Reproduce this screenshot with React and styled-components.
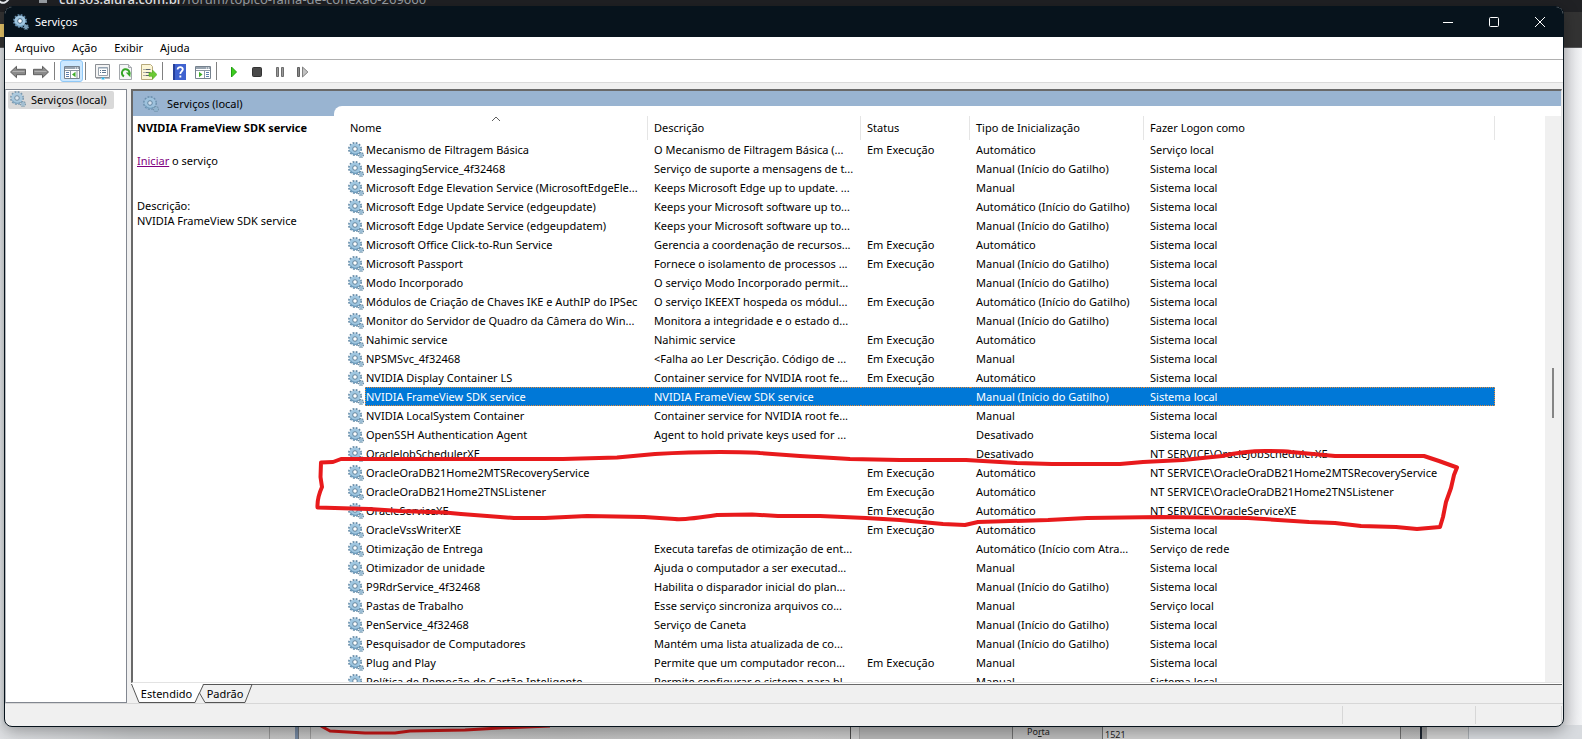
import React from 'react';
import styled, { createGlobalStyle } from 'styled-components';

const GlobalStyle = createGlobalStyle`
  *, *::before, *::after { box-sizing: border-box; }
  body {
    margin: 0;
    overflow: hidden;
    font: 11px/15px "Noto Sans", "Open Sans", sans-serif;
    color: #000;
  }
  button { font: inherit; color: inherit; border: 0; padding: 0; background: none; }
`;

/* ---------- desktop behind the window ---------- */

const Desktop = styled.div`
  position: relative;
  display: flex;
  flex-direction: column;
  height: 100vh;
  overflow: hidden;
  background: linear-gradient(90deg, #e4e7ea 0, #d6dadd 5px, #d6dadd calc(100% - 20px), #e2e3e6 calc(100% - 16px), #f3f4f6 100%);
`;

const BrowserTop = styled.div`
  flex: none;
  height: 48px;
  background: linear-gradient(#202124 12px, #333333 12px);
  border-bottom: 1px solid #57585a;
`;

const AddressLine = styled.div`
  display: flex;
  align-items: flex-end;
  height: 7px;
  padding-left: 39px;
  gap: 12px;
  font-size: 13px;
  line-height: 15px;
  color: #9aa0a6;
  white-space: nowrap;
  overflow: hidden;
  b { font-weight: 500; color: #e8eaed; }
`;

const LockBody = styled.span`
  flex: none;
  width: 8px;
  height: 6px;
  margin-bottom: 4px;
  background: #9aa0a6;
`;

const Spacer = styled.div` flex: 1; `;

const Behind = styled.div`
  flex: none;
  display: flex;
  height: 14px;
  background: linear-gradient(90deg, #dfe1e4 0, #c9cbcd 130px, #c6c6c6 270px, #c0c0c0 560px, #cccccc 800px, #bcbcbc 100%);
`;

const Strip = styled.div`
  flex: ${(p) => (p.$grow ? '1 1 0' : 'none')};
  width: ${(p) => p.$w || 0}px;
  background: ${(p) => p.$bg || 'transparent'};
  border-right: ${(p) => p.$line || 1}px solid ${(p) => p.$edge || 'transparent'};
`;

const PortField = styled.label`
  display: flex;
  flex: none;
  font-size: 9px;
  line-height: 13px;
  color: #222;
  background: #bdbdbd;
  padding-left: 14px;
  span { width: 75px; }
  input {
    width: 299px;
    height: 18px;
    padding: 0 2px;
    border: 1px solid #707070;
    background: #cfcfcf;
    font: inherit;
    color: #222;
  }
`;

/* ---------- window frame ---------- */

const Window = styled.main`
  position: absolute;
  inset: 6px 18px 12px 4px;
  display: flex;
  flex-direction: column;
  overflow: hidden;
  border: 1px solid #07131c;
  border-radius: 8px;
  background: #f0f0f0;
  box-shadow: 0 4px 16px rgba(0, 0, 0, 0.32);
`;

const TitleBar = styled.header`
  flex: none;
  display: flex;
  align-items: center;
  height: 30px;
  padding-left: 8px;
  gap: 6px;
  background: #07131c;
  color: #fff;
  h1 { margin: 0; flex: 1; padding-bottom: 1px; font-size: 11px; font-weight: 400; }
`;

const CaptionGroup = styled.div` display: flex; `;

const CaptionButton = styled.button`
  display: grid;
  place-items: center;
  width: 46px;
  height: 28px;
`;

const MenuBar = styled.nav`
  flex: none;
  display: flex;
  gap: 17px;
  height: 23px;
  padding: 0 10px 2px;
  background: #fff;
  border-bottom: 1px solid #b0b0b0;
`;

const ToolBar = styled.div`
  flex: none;
  display: flex;
  align-items: center;
  height: 23px;
  padding: 0 1px;
  background: #fff;
  border-bottom: 1px solid #dadada;
`;

const ToolButton = styled.button`
  display: grid;
  place-items: center;
  width: 23px;
  height: 22px;
  padding-top: 2px;
  border: 1px solid ${(p) => (p.$active ? '#90c8f6' : 'transparent')};
  border-radius: 3px;
  background: ${(p) => (p.$active ? '#cce8ff' : 'none')};
`;

const ToolSeparator = styled.span`
  width: 1px;
  height: 18px;
  margin: 0 5px 0 2px;
  background: #808080;
`;

const Body = styled.div`
  flex: 1;
  min-height: 0;
  display: flex;
  gap: 4px;
  padding: 6px 1px 0 0;
`;

const TreePane = styled.aside`
  flex: none;
  width: 122px;
  padding: 1px 2px;
  border: 1px solid #828790;
  border-left-color: #b4b7bc;
  background: #fff;
`;

const TreeItem = styled.button`
  display: flex;
  align-items: center;
  gap: 5px;
  height: 18px;
  width: 106px;
  padding: 0 0 2px 2px;
  border-radius: 2px;
  background: #d9d9d9;
  white-space: nowrap;
`;

/* ---------- result pane ---------- */

const ResultColumn = styled.section`
  flex: 1;
  min-width: 0;
  display: flex;
  flex-direction: column;
`;

const ResultPane = styled.div`
  flex: 1;
  min-height: 0;
  display: flex;
  flex-direction: column;
  border: solid;
  border-width: 2px 1px 1px 2px;
  border-color: #696969 #e3e3e3 #e3e3e3 #696969;
  background: #fff;
`;

const ResultHeader = styled.div`
  flex: none;
  display: flex;
  height: 25px;
  background: #99b4d1;
`;

const ResultTitle = styled.h2`
  display: flex;
  align-items: center;
  gap: 8px;
  width: 201px;
  margin: 0;
  padding-left: 10px;
  font-size: 11px;
  font-weight: 400;
`;

const HeaderNotch = styled.span`
  flex: 1;
  align-self: flex-end;
  height: 10px;
  border-top-left-radius: 8px;
  background: #fff;
`;

const ResultBody = styled.div`
  flex: 1;
  min-height: 0;
  display: flex;
`;

const Details = styled.div`
  flex: none;
  width: 214px;
  padding: 4px;
  h3 { margin: 0 0 18px; font-size: 11px; font-weight: 700; white-space: nowrap; }
  p { margin: 0 0 30px; }
  a { color: #800080; }
`;

const ListPane = styled.div`
  flex: 1;
  min-width: 0;
  overflow: hidden;
`;

const ScrollTrack = styled.div`
  flex: none;
  width: 16px;
  padding: 252px 0 0 7px;
  background: #f0f0f0;
`;

const ScrollThumb = styled.div`
  width: 2px;
  height: 50px;
  background: #858585;
`;

const ServiceTable = styled.table`
  table-layout: fixed;
  width: 1148px;
  border-collapse: separate;
  border-spacing: 0;
`;

const HeadCell = styled.th`
  position: relative;
  height: 24px;
  padding: 0 0 2px ${(p) => (p.$first ? 3 : 6)}px;
  border-right: 1px solid #e5e5e5;
  text-align: left;
  font-weight: 400;
  svg { position: absolute; top: 0; left: 50%; margin-left: -6px; }
`;

const Cell = styled.td`
  height: 19px;
  padding: 0 0 0 6px;
  line-height: 17px;
  border: 0 dotted #e58b3a;
  border-width: ${(p) => (p.$selected ? '1px 0' : '0')};
  background: ${(p) => (p.$selected ? '#0078d7' : 'none')};
  color: ${(p) => (p.$selected ? '#fff' : 'inherit')};
  white-space: nowrap;
  &:last-child { border-right-width: ${(p) => (p.$selected ? 1 : 0)}px; }
`;

const NameCell = styled.td`
  height: 19px;
  padding: 0 0 0 1px;
  div { display: flex; align-items: center; gap: 1px; height: 19px; }
  svg { flex: none; }
  span {
    flex: 1;
    height: 19px;
    border: 0 dotted #e58b3a;
    border-width: ${(p) => (p.$selected ? '1px 0 1px 1px' : '0')};
    padding-left: ${(p) => (p.$selected ? 0 : 1)}px;
    line-height: ${(p) => (p.$selected ? 17 : 19)}px;
    background: ${(p) => (p.$selected ? '#0078d7' : 'none')};
    color: ${(p) => (p.$selected ? '#fff' : 'inherit')};
    white-space: nowrap;
  }
`;

/* ---------- bottom tabs and status bar ---------- */

const TabRow = styled.div`
  flex: none;
  display: flex;
  height: 20px;
  border-top: 1px solid #fff;
  background: linear-gradient(#696969 1px, #f0f0f0 1px);
`;

const Tab = styled.button`
  position: relative;
  width: ${(p) => p.$w}px;
  height: 19px;
  margin-left: ${(p) => p.$overlap || 0}px;
  padding-right: 2px;
  line-height: 18px;
  svg { position: absolute; inset: 0; }
  span { position: relative; }
`;

const StatusBar = styled.footer`
  flex: none;
  display: flex;
  height: 23px;
  padding: 2px 1px;
  border-top: 1px solid #d7d7d7;
`;

const StatusCell = styled.div`
  flex: ${(p) => (p.$w ? 'none' : '1')};
  width: ${(p) => (p.$w ? p.$w + 'px' : 'auto')};
  border-right: 1px solid #d7d7d7;
`;

const Annotation = styled.svg`
  position: absolute;
  top: 0;
  left: 0;
  width: 100%;
  height: 100%;
  pointer-events: none;
`;

/* ---------- icons ---------- */

const Gears = ({ faded }) => (
  <svg width="16" height="16" viewBox="0 0 16 16" fill="none" opacity={faded ? 0.8 : 1} aria-hidden="true">
    <circle cx="7" cy="7" r="6" stroke="#5f86a3" strokeWidth="1.9" strokeDasharray="1.8 1.34" />
    <circle cx="7" cy="7" r="4" stroke="#9fc6e0" strokeWidth="3.2" />
    <path d="M2.4 9.400a5.200 5.200 0 0 0 8 1.700" stroke="#6c9abb" strokeWidth="1.2" />
    <circle cx="7" cy="7" r="2.300" stroke="#587d98" strokeWidth="1" fill={faded ? '#dfeaf4' : '#fff'} />
    <circle cx="13" cy="13" r="2.300" stroke="#66899f" strokeWidth="1.500" strokeDasharray="1.1 .7" />
    <circle cx="13" cy="13" r="1.200" stroke="#8fb5cf" strokeWidth="1.500" />
  </svg>
);

const Icon = ({ children }) => (
  <svg width="16" height="16" viewBox="0 0 16 16" fill="none" aria-hidden="true">{children}</svg>
);

const Back = () => (
  <Icon>
    <path d="M.5 8 6.500 2.300v3h9v5.400h-9v3z" fill="#8a8a8a" stroke="#606060" strokeLinejoin="round" />
    <path d="M2.500 7.500h12" stroke="#b0b0b0" />
  </Icon>
);
const Forward = () => (
  <Icon>
    <path d="M15.500 8 9.500 2.300v3h-9v5.400h9v3z" fill="#8a8a8a" stroke="#606060" strokeLinejoin="round" />
    <path d="M1.500 7.500h12" stroke="#b0b0b0" />
  </Icon>
);
const TreeToggle = () => (
  <Icon>
    <path d="M.5 2.500h15v12H.5z" fill="#fff" stroke="#76828e" />
    <path d="M1 3h14v2H1z" fill="#98a4b0" />
    <path d="M11 4h1m1 0h1" stroke="#fff" />
    <path d="M1 6.500h14M6.500 7v7M13 7v7" stroke="#8a96a2" />
    <path d="M2 8.500h3M2 10.500h3M2 12.500h3" stroke="#5b7fae" />
    <path d="M11.500 7.800v5.400L8 10.500z" fill="#3fae2a" />
  </Icon>
);
const ActionToggle = () => (
  <Icon>
    <path d="M.5 2.500h15v12H.5z" fill="#fff" stroke="#76828e" />
    <path d="M1 3h14v2H1z" fill="#98a4b0" />
    <path d="M11 4h1m1 0h1" stroke="#fff" />
    <path d="M1 6.500h14M9.500 7v7" stroke="#8a96a2" />
    <path d="M11 8.500h3M11 10.500h3M11 12.500h3" stroke="#5b7fae" />
    <path d="M4 7.800v5.400l3.500-2.700z" fill="#3fae2a" />
  </Icon>
);
const Properties = () => (
  <Icon>
    <path d="M.5.5h14v13H.5z" fill="#f4f4f4" stroke="#8b8f94" />
    <path d="M3.500 3.500h9v8h-9z" fill="#fff" stroke="#9aa3ab" />
    <path d="M3.500 4h9" stroke="#8fa3b8" />
    <path d="M5 6.500h1m1 0h4M5 8.500h1m1 0h4" stroke="#5f7891" />
    <path d="M1 14.500h5m4 0h5" stroke="#b8bcc0" />
    <path d="M6.500 14.500h3" stroke="#2fb9f2" strokeWidth="2" />
  </Icon>
);
const Refresh = () => (
  <Icon>
    <path d="M1.500.5h9l3 3v12h-12z" fill="#f5f6f7" stroke="#a4a8ac" />
    <path d="M10.500.5v3h3" fill="#dde0e3" stroke="#a4a8ac" />
    <path d="M6 12.400a3.800 3.800 0 1 1 4.800-1.200" stroke="#34a526" strokeWidth="2" />
    <path d="M7.800 8.600h4.600v4.600z" fill="#34a526" />
  </Icon>
);
const Export = () => (
  <Icon>
    <path d="M.5.5h9l2 2v13H.5z" fill="#fcf6d6" stroke="#b7aa7c" />
    <path d="M2.500 5.500h1m1 0h5M2.500 8.500h1m1 0h5M2.500 11.500h1m1 0h5" stroke="#5d6672" />
    <path d="M8 8.800h3.500V6L16 10.600l-4.500 4.600v-2.900H8z" fill="#6ccb34" stroke="#4fa81f" strokeWidth=".6" />
  </Icon>
);
const Help = () => (
  <Icon>
    <path d="M1 0h13v16H1z" fill="#3f62cf" />
    <path d="M1 0h2v16H1z" fill="#27409a" />
    <path d="M5.600 5.400C5.600 2.300 11 2.500 10.800 5.400 10.700 7.400 8.300 7.400 8.300 10" stroke="#fff" strokeWidth="1.800" />
    <path d="M7.400 11.500h1.900v1.900H7.400z" fill="#fff" />
  </Icon>
);
const Play = () => (
  <Icon><path d="M5.500 3v10l5-5z" fill="#3ccc1e" stroke="#22a010" strokeLinejoin="round" /></Icon>
);
const Stop = () => (
  <Icon><rect x="3.500" y="3.500" width="9" height="9" rx="1" fill="#4a4a4a" stroke="#333" /></Icon>
);
const Pause = () => (
  <Icon><path d="M4.500 3.500h2v9h-2zM9.500 3.500h2v9h-2z" fill="#9a9a9a" stroke="#6d6d6d" /></Icon>
);
const Step = () => (
  <Icon>
    <path d="M2.500 3.500h2v9h-2z" fill="#8a8a8a" stroke="#606060" />
    <path d="M7.500 3v10l5.400-5z" fill="#c2c2c2" stroke="#808080" strokeLinejoin="round" />
  </Icon>
);

/* ---------- data ---------- */

const RUN = 'Em Execução';
const AUTO = 'Automático';
const TRIGGER = 'Manual (Início do Gatilho)';
const AUTO_TRIGGER = 'Automático (Início do Gatilho)';
const LOCAL = 'Sistema local';

const services = [
  ['Mecanismo de Filtragem Básica', 'O Mecanismo de Filtragem Básica (...', RUN, AUTO, 'Serviço local'],
  ['MessagingService_4f32468', 'Serviço de suporte a mensagens de t...', '', TRIGGER, LOCAL],
  ['Microsoft Edge Elevation Service (MicrosoftEdgeEle...', 'Keeps Microsoft Edge up to update. ...', '', 'Manual', LOCAL],
  ['Microsoft Edge Update Service (edgeupdate)', 'Keeps your Microsoft software up to...', '', AUTO_TRIGGER, LOCAL],
  ['Microsoft Edge Update Service (edgeupdatem)', 'Keeps your Microsoft software up to...', '', TRIGGER, LOCAL],
  ['Microsoft Office Click-to-Run Service', 'Gerencia a coordenação de recursos...', RUN, AUTO, LOCAL],
  ['Microsoft Passport', 'Fornece o isolamento de processos ...', RUN, TRIGGER, LOCAL],
  ['Modo Incorporado', 'O serviço Modo Incorporado permit...', '', TRIGGER, LOCAL],
  ['Módulos de Criação de Chaves IKE e AuthIP do IPSec', 'O serviço IKEEXT hospeda os módul...', RUN, AUTO_TRIGGER, LOCAL],
  ['Monitor do Servidor de Quadro da Câmera do Win...', 'Monitora a integridade e o estado d...', '', TRIGGER, LOCAL],
  ['Nahimic service', 'Nahimic service', RUN, AUTO, LOCAL],
  ['NPSMSvc_4f32468', '<Falha ao Ler Descrição. Código de ...', RUN, 'Manual', LOCAL],
  ['NVIDIA Display Container LS', 'Container service for NVIDIA root fe...', RUN, AUTO, LOCAL],
  ['NVIDIA FrameView SDK service', 'NVIDIA FrameView SDK service', '', TRIGGER, LOCAL],
  ['NVIDIA LocalSystem Container', 'Container service for NVIDIA root fe...', '', 'Manual', LOCAL],
  ['OpenSSH Authentication Agent', 'Agent to hold private keys used for ...', '', 'Desativado', LOCAL],
  ['OracleJobSchedulerXE', '', '', 'Desativado', 'NT SERVICE\\OracleJobSchedulerXE'],
  ['OracleOraDB21Home2MTSRecoveryService', '', RUN, AUTO, 'NT SERVICE\\OracleOraDB21Home2MTSRecoveryService'],
  ['OracleOraDB21Home2TNSListener', '', RUN, AUTO, 'NT SERVICE\\OracleOraDB21Home2TNSListener'],
  ['OracleServiceXE', '', RUN, AUTO, 'NT SERVICE\\OracleServiceXE'],
  ['OracleVssWriterXE', '', RUN, AUTO, LOCAL],
  ['Otimização de Entrega', 'Executa tarefas de otimização de ent...', '', 'Automático (Início com Atra...', 'Serviço de rede'],
  ['Otimizador de unidade', 'Ajuda o computador a ser executad...', '', 'Manual', LOCAL],
  ['P9RdrService_4f32468', 'Habilita o disparador inicial do plan...', '', TRIGGER, LOCAL],
  ['Pastas de Trabalho', 'Esse serviço sincroniza arquivos co...', '', 'Manual', 'Serviço local'],
  ['PenService_4f32468', 'Serviço de Caneta', '', TRIGGER, LOCAL],
  ['Pesquisador de Computadores', 'Mantém uma lista atualizada de co...', '', TRIGGER, LOCAL],
  ['Plug and Play', 'Permite que um computador recon...', RUN, 'Manual', LOCAL],
  ['Política de Remoção de Cartão Inteligente', 'Permite configurar o sistema para bl...', '', 'Manual', LOCAL],
];

const selectedName = 'NVIDIA FrameView SDK service';

const toolGroups = [
  [['Voltar', Back], ['Avançar', Forward]],
  [['Mostrar árvore', TreeToggle, true]],
  [['Propriedades', Properties], ['Atualizar', Refresh], ['Exportar lista', Export]],
  [['Ajuda', Help], ['Painel de ações', ActionToggle]],
  [['Iniciar serviço', Play], ['Parar serviço', Stop], ['Pausar serviço', Pause], ['Reiniciar serviço', Step]],
];

const ServiceRow = ({ service }) => {
  const [name, ...rest] = service;
  const selected = name === selectedName;
  return (
    <tr aria-selected={selected}>
      <NameCell $selected={selected}>
        <div><Gears /><span>{name}</span></div>
      </NameCell>
      {rest.map((text, i) => <Cell key={i} $selected={selected}>{text}</Cell>)}
    </tr>
  );
};

const CaptionButtons = () => (
  <CaptionGroup>
    <CaptionButton aria-label="Minimizar">
      <svg width="10" height="10" viewBox="0 0 10 10"><path d="M0 5.500h10" stroke="#fff" /></svg>
    </CaptionButton>
    <CaptionButton aria-label="Maximizar">
      <svg width="10" height="10" viewBox="0 0 10 10"><rect x=".5" y=".5" width="9" height="9" rx="1" fill="none" stroke="#fff" /></svg>
    </CaptionButton>
    <CaptionButton aria-label="Fechar">
      <svg width="10" height="10" viewBox="0 0 10 10"><path d="M0 0l10 10M10 0 0 10" stroke="#fff" /></svg>
    </CaptionButton>
  </CaptionGroup>
);

export default function App() {
  return (
    <Desktop>
      <GlobalStyle />
      <BrowserTop>
        <AddressLine>
          <LockBody />
          <span><b>cursos.alura.com.br</b>/forum/topico-falha-de-conexao-269660</span>
        </AddressLine>
      </BrowserTop>
      <Spacer />
      <Behind>
        <Strip $w={270} $edge="#979797" />
        <Strip $w={25} />
        <Strip $w={4} $bg="#7487a0" $edge="#6a6f76" />
        <Strip $w={12} $edge="#9a9a9a" />
        <Strip $grow $edge="#4a4a4a" />
        <Strip $w={9} $edge="#a2a2a2" />
        <Strip $w={153} $bg="#b8b8b8" $edge="#707070" />
        <PortField>
          <span>Po<u>r</u>ta</span>
          <input defaultValue="1521" />
        </PortField>
        <Strip $w={21} $line={2} $edge="#1d2530" />
        <Strip $w={5} $bg="#9a9a9a" />
        <Strip $w={42} $bg="#d2d2d2" $edge="#a8adb2" />
        <Strip $w={113} $bg="#d8dbdf" />
      </Behind>

      <Annotation aria-hidden="true">
        <path
          d="M321 726 330 731 365 733 395 733 410 731 465 730 500 728 550 726"
          fill="none" stroke="#c41616" strokeWidth="3" strokeLinejoin="round"
        />
        <path d="M-1 1Q5 6 10-3" fill="none" stroke="#e8eaed" strokeWidth="2" />
        <path d="M0 24h4v13H0z" fill="#e9c86a" />
      </Annotation>

      <Window>
        <TitleBar>
          <Gears />
          <h1>Serviços</h1>
          <CaptionButtons />
        </TitleBar>
        <MenuBar>
          {['Arquivo', 'Ação', 'Exibir', 'Ajuda'].map((label) => <button key={label}>{label}</button>)}
        </MenuBar>
        <ToolBar>
          {toolGroups.map((group, g) => (
            <React.Fragment key={g}>
              {g > 0 && <ToolSeparator />}
              {group.map(([label, Glyph, active]) => (
                <ToolButton key={label} aria-label={label} $active={active}><Glyph /></ToolButton>
              ))}
            </React.Fragment>
          ))}
        </ToolBar>

        <Body>
          <TreePane>
            <TreeItem><Gears faded />Serviços (local)</TreeItem>
          </TreePane>
          <ResultColumn>
            <ResultPane>
              <ResultHeader>
                <ResultTitle><Gears faded />Serviços (local)</ResultTitle>
                <HeaderNotch />
              </ResultHeader>
              <ResultBody>
                <Details>
                  <h3>{selectedName}</h3>
                  <p><a href="#iniciar">Iniciar</a> o serviço</p>
                  <div>Descrição:</div>
                  <div>{selectedName}</div>
                </Details>
                <ListPane>
                  <ServiceTable>
                    <colgroup>
                      <col width="301" />
                      <col width="213" />
                      <col width="109" />
                      <col width="174" />
                      <col width="351" />
                    </colgroup>
                    <thead>
                      <tr>
                        <HeadCell $first>
                          Nome
                          <svg width="10" height="6" viewBox="0 0 10 6" fill="none" aria-hidden="true">
                            <path d="M1 5l4-4 4 4" stroke="#606060" />
                          </svg>
                        </HeadCell>
                        {['Descrição', 'Status', 'Tipo de Inicialização', 'Fazer Logon como'].map((label) => (
                          <HeadCell key={label}>{label}</HeadCell>
                        ))}
                      </tr>
                    </thead>
                    <tbody>
                      {services.map((service) => <ServiceRow key={service[0]} service={service} />)}
                    </tbody>
                  </ServiceTable>
                </ListPane>
                <ScrollTrack><ScrollThumb /></ScrollTrack>
              </ResultBody>
            </ResultPane>
            <TabRow>
              <Tab $w={73}>
                <svg width="73" height="19" fill="none" aria-hidden="true">
                  <path d="M0 0 8 18.500H64L72 0z" fill="#fff" />
                  <path d="M.5 0 8 18.500H64L68.500 8.500" stroke="#555" />
                </svg>
                <span>Estendido</span>
              </Tab>
              <Tab $w={54} $overlap={-5}>
                <svg width="54" height="19" fill="none" aria-hidden="true">
                  <path d="M4.500 .5.500 9 6 18.500H46L53 .5z" fill="#f0f0f0" stroke="#555" />
                </svg>
                <span>Padrão</span>
              </Tab>
            </TabRow>
          </ResultColumn>
        </Body>
        <StatusBar>
          <StatusCell />
          <StatusCell $w={133} />
          <StatusCell $w={86} />
        </StatusBar>
      </Window>

      <Annotation aria-hidden="true">
        <path
          d="M321 462.500 333 462 341 459 563 459 617 457.500 655 454Q690 452 720 452T760 453L800 456 850 459 900 460 966 460 1017 463 1052 464 1120 464 1143 462 1183 460 1222 456Q1245 451 1265 451T1291 452L1335 456 1424 456 1439 461 1457 467.500 1454 475 1451 488 1446 502 1443 517 1440 527 1417 529 1396 527 1361 526 1335 523 1309 522 1248 518 1161 517 1087 518 1048 520 978 522 965 525 943 524 900 520 866 518 820 516 778 516 752 514.500 717 515Q685 520 675 519L644 517 587 516 545 518 514 518 461 514 445 512.500 400 511 369 509 317.500 507.500Q317 498 322 487L320.500 477z"
          fill="none" stroke="#e81a1c" strokeWidth="4" strokeLinejoin="round"
        />
      </Annotation>
    </Desktop>
  );
}
